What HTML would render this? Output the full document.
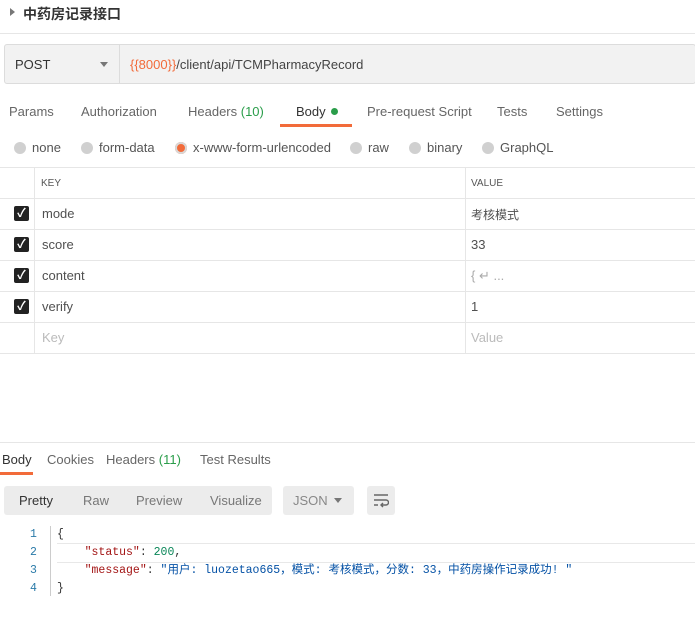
<!DOCTYPE html><html><head><meta charset="utf-8"><style>
body{margin:0;width:695px;height:630px;background:#fff;font-family:"Liberation Sans","Noto Sans CJK SC",sans-serif;font-size:13px;color:#505050;position:relative;overflow:hidden}
.a{position:absolute;white-space:nowrap}
.rad{display:inline-block;width:12px;height:12px;border-radius:50%;background:#d0d0d0;vertical-align:-2px;margin-right:6px}
.cb{position:absolute;left:14px;width:15px;height:15px;background:#222;border-radius:2px;color:#fff;font-size:12px;line-height:15px;text-align:center;font-weight:bold}
.hl{position:absolute;left:0;width:695px;height:1px;background:#e6e6e6}
.mono{font-family:"Liberation Mono","Noto Sans CJK SC",monospace;font-size:11.5px}
</style></head><body>
<div class="a" style="left:10px;top:8px;width:0;height:0;border-left:5px solid #777;border-top:4px solid transparent;border-bottom:4px solid transparent"></div>
<div class="a" style="left:23px;top:4px;font-size:14px;font-weight:bold;color:#333">中药房记录接口</div>
<div class="hl" style="top:33px"></div>
<div class="a" style="left:4px;top:44px;width:690px;height:38px;background:#f2f2f2;border:1px solid #dcdcdc;border-radius:3px"></div>
<div class="a" style="left:119px;top:45px;width:1px;height:38px;background:#dcdcdc"></div>
<div class="a" style="left:15px;top:57px;color:#333">POST</div>
<div class="a" style="left:100px;top:62px;border-top:5px solid #777;border-left:4px solid transparent;border-right:4px solid transparent"></div>
<div class="a" style="left:130px;top:57px;color:#444"><span style="color:#f26b3a">{{8000}}</span>/client/api/TCMPharmacyRecord</div>
<div class="a" style="left:9px;top:104px;color:#666">Params</div>
<div class="a" style="left:81px;top:104px;color:#666">Authorization</div>
<div class="a" style="left:188px;top:104px;color:#666">Headers <span style="color:#2a9d4a">(10)</span></div>
<div class="a" style="left:296px;top:104px;color:#333">Body <span style="display:inline-block;width:7px;height:7px;border-radius:50%;background:#2a9d4a;vertical-align:1px;margin-left:2px"></span></div>
<div class="a" style="left:280px;top:124px;width:72px;height:3px;background:#f26b3a"></div>
<div class="a" style="left:367px;top:104px;color:#666">Pre-request Script</div>
<div class="a" style="left:497px;top:104px;color:#666">Tests</div>
<div class="a" style="left:556px;top:104px;color:#666">Settings</div>
<div class="a" style="left:14px;top:140px;color:#555"><span class="rad"></span>none</div>
<div class="a" style="left:81px;top:140px;color:#555"><span class="rad"></span>form-data</div>
<div class="a" style="left:175px;top:140px;color:#555"><span class="rad" style="background:#f26b3a;box-shadow:0 0 0 2px #d8d8d8 inset;border:0"></span>x-www-form-urlencoded</div>
<div class="a" style="left:350px;top:140px;color:#555"><span class="rad"></span>raw</div>
<div class="a" style="left:409px;top:140px;color:#555"><span class="rad"></span>binary</div>
<div class="a" style="left:482px;top:140px;color:#555"><span class="rad"></span>GraphQL</div>
<div class="hl" style="top:167px"></div><div class="hl" style="top:198px"></div><div class="hl" style="top:229px"></div><div class="hl" style="top:260px"></div><div class="hl" style="top:291px"></div><div class="hl" style="top:322px"></div><div class="hl" style="top:353px"></div>
<div class="a" style="left:34px;top:168px;width:1px;height:185px;background:#e6e6e6"></div>
<div class="a" style="left:465px;top:168px;width:1px;height:185px;background:#e6e6e6"></div>
<div class="a" style="left:41px;top:178px;font-size:10px;color:#555">KEY</div>
<div class="a" style="left:471px;top:178px;font-size:10px;color:#555">VALUE</div>
<div class="cb" style="top:206px">✓</div><div class="cb" style="top:237px">✓</div><div class="cb" style="top:268px">✓</div><div class="cb" style="top:299px">✓</div>
<div class="a" style="left:42px;top:206px">mode</div><div class="a" style="left:471px;top:206px;font-size:12px">考核模式</div>
<div class="a" style="left:42px;top:237px">score</div><div class="a" style="left:471px;top:237px">33</div>
<div class="a" style="left:42px;top:268px">content</div><div class="a" style="left:471px;top:268px;color:#aaa">{ ↵ ...</div>
<div class="a" style="left:42px;top:299px">verify</div><div class="a" style="left:471px;top:299px">1</div>
<div class="a" style="left:42px;top:330px;color:#bbb">Key</div><div class="a" style="left:471px;top:330px;color:#bbb">Value</div>
<div class="hl" style="top:442px"></div>
<div class="a" style="left:2px;top:452px;color:#333">Body</div>
<div class="a" style="left:0;top:472px;width:33px;height:3px;background:#f26b3a"></div>
<div class="a" style="left:47px;top:452px;color:#666">Cookies</div>
<div class="a" style="left:106px;top:452px;color:#666">Headers <span style="color:#2a9d4a">(11)</span></div>
<div class="a" style="left:200px;top:452px;color:#666">Test Results</div>
<div class="a" style="left:4px;top:486px;width:268px;height:29px;background:#ececec;border-radius:3px"></div>
<div class="a" style="left:19px;top:493px;color:#333">Pretty</div>
<div class="a" style="left:83px;top:493px;color:#777">Raw</div>
<div class="a" style="left:136px;top:493px;color:#777">Preview</div>
<div class="a" style="left:210px;top:493px;color:#777">Visualize</div>
<div class="a" style="left:283px;top:486px;width:71px;height:29px;background:#ececec;border-radius:3px"></div>
<div class="a" style="left:293px;top:493px;color:#888">JSON</div>
<div class="a" style="left:334px;top:498px;border-top:5px solid #777;border-left:4px solid transparent;border-right:4px solid transparent"></div>
<div class="a" style="left:367px;top:486px;width:28px;height:29px;background:#ececec;border-radius:3px"></div>
<svg class="a" style="left:373px;top:492px" width="16" height="16" viewBox="0 0 16 16"><path d="M1 3h14M1 8h12a2.5 2.5 0 0 1 0 5H8M10 11l-2 2 2 2M1 13h4" stroke="#666" stroke-width="1.4" fill="none"/></svg>
<div class="a" style="left:57px;top:543px;width:638px;height:18px;border-top:1px solid #e8e8e8;border-bottom:1px solid #e8e8e8"></div>
<div class="a" style="left:50px;top:526px;width:1px;height:70px;background:#ccc"></div>
<div class="a mono" style="left:30px;top:526px;color:#2a7aa8;line-height:18px">1<br>2<br>3<br>4</div>
<div class="a mono" style="left:57px;top:526px;line-height:18px;color:#333">{<br>&nbsp;&nbsp;&nbsp;&nbsp;<span style="color:#a31515">"status"</span>: <span style="color:#098658">200</span>,<br>&nbsp;&nbsp;&nbsp;&nbsp;<span style="color:#a31515">"message"</span>: <span style="color:#0451a5">"用户: luozetao665，模式: 考核模式，分数: 33，中药房操作记录成功! "</span><br>}</div>
</body></html>
